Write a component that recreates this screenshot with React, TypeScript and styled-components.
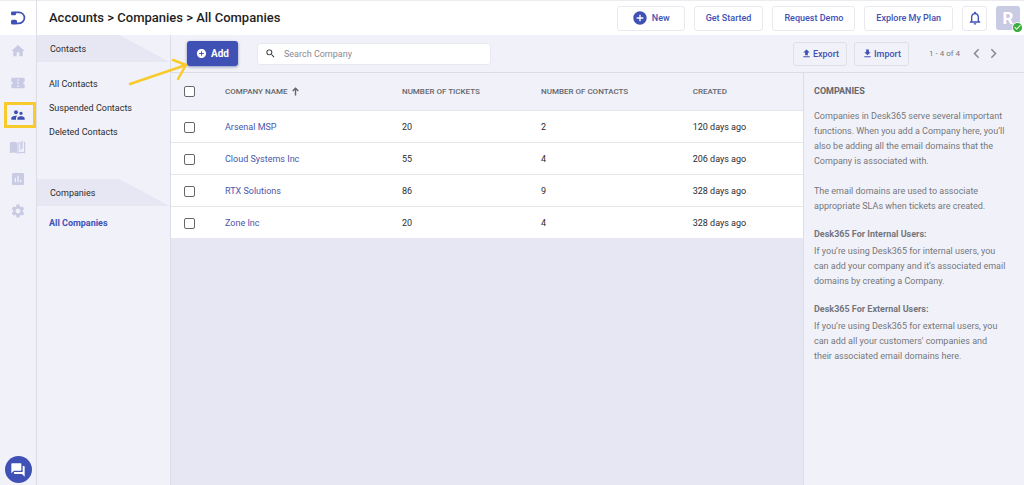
import React from "react";
import styled, { createGlobalStyle } from "styled-components";
import {
  MdHome,
  MdConfirmationNumber,
  MdSupervisorAccount,
  MdAssessment,
  MdSettings,
  MdForum,
  MdSearch,
  MdChevronLeft,
  MdChevronRight,
  MdAddCircle,
  MdNotificationsNone,
  MdUpload,
  MdDownload,
  MdCheckCircle,
} from "react-icons/md";

const color = {
  primary: "#3f51b5",
  ink: "#2b2b2f",
  grey: "#75767c",
  panel: "#f1f2f9",
  shade: "#e7e7f3",
  line: "#dcdde6",
  faded: "#c9cae3",
  highlight: "#f8ca2c",
};

const GlobalStyle = createGlobalStyle`
  *, *::before, *::after { box-sizing: border-box; }
  body {
    margin: 0;
    font-family: Roboto, "Liberation Sans", sans-serif;
    font-size: 9px;
    line-height: 16px;
    color: ${color.ink};
  }
  button, input { font: inherit; }
  a { text-decoration: none; }
  h1, h2, h3, p, ul { margin: 0; padding: 0; }
  svg { flex-shrink: 0; }
`;

const Page = styled.div`
  position: relative;
  display: flex;
  min-height: 100vh;
  background: ${color.panel};
`;

const Rail = styled.nav`
  flex: 0 0 37px;
  display: flex;
  flex-direction: column;
  align-items: center;
  border-right: 1px solid ${color.line};
  padding-bottom: 2px;
`;

const LogoLink = styled.a`
  width: 100%;
  height: 35px;
  display: flex;
  align-items: center;
  justify-content: center;
  background: #fff;
  border-top: 1px solid #ececf0;
`;

const RailLink = styled.a<{ $active?: boolean }>`
  width: 32px;
  height: 26px;
  margin-top: 3px;
  margin-bottom: 3px;
  margin-left: 4px;
  padding-right: 5px;
  display: flex;
  align-items: center;
  justify-content: center;
  font-size: 16px;
  color: ${(p) => (p.$active ? color.primary : color.faded)};
  border: 3px solid ${(p) => (p.$active ? color.highlight : "transparent")};
`;

const ChatButton = styled.button`
  width: 27px;
  height: 27px;
  margin-top: auto;
  padding: 0;
  display: flex;
  align-items: center;
  justify-content: center;
  border: 0;
  border-radius: 50%;
  background: ${color.primary};
  color: #fff;
  font-size: 16px;
`;

const Body = styled.div`
  flex: 1;
  min-width: 0;
  display: flex;
  flex-direction: column;
`;

const Header = styled.header`
  height: 35px;
  display: flex;
  align-items: center;
  justify-content: space-between;
  padding: 0 4px 0 12px;
  background: #fff;
  border-top: 1px solid #ececf0;
`;

const Title = styled.h1`
  font-size: 13px;
  font-weight: 500;
  color: #1f1f23;
`;

const HeaderActions = styled.div`
  display: flex;
  align-items: center;
  gap: 9px;
`;

const OutlineButton = styled.button<{ $compact?: boolean }>`
  height: ${(p) => (p.$compact ? 24 : 25)}px;
  padding: 0 ${(p) => (p.$compact ? 7 : 11)}px;
  display: flex;
  align-items: center;
  gap: ${(p) => (p.$compact ? 1 : 4)}px;
  border: 1px solid ${(p) => (p.$compact ? "#dddfe9" : "#e9e9ee")};
  border-radius: 3px;
  background: ${(p) => (p.$compact ? "transparent" : "#fff")};
  color: ${color.primary};
  font-weight: 500;
  white-space: nowrap;
`;

const NewButton = styled(OutlineButton)`
  padding: 0 14px;
`;

const BellButton = styled(OutlineButton)`
  width: 25px;
  padding: 0;
  justify-content: center;
`;

const Avatar = styled.button`
  position: relative;
  width: 24px;
  height: 24px;
  padding: 0;
  border: 0;
  border-radius: 3px;
  background: ${color.faded};
  color: #fff;
  font-size: 17px;
  font-weight: 700;
`;

const Presence = styled.span`
  position: absolute;
  right: -3px;
  bottom: -3px;
  display: flex;
  border-radius: 50%;
  background: #fff;
  color: #3dae3d;
  font-size: 11px;
`;

const Columns = styled.div`
  flex: 1;
  display: flex;
`;

const Sidebar = styled.aside`
  flex: 0 0 134px;
  border-right: 1px solid ${color.line};
`;

const SideSection = styled.section`
  min-height: 144px;
`;

const SideHeading = styled.h2`
  height: 27px;
  padding-left: 13px;
  font-size: 9px;
  font-weight: 400;
  line-height: 28px;
  background: ${color.shade};
  clip-path: polygon(0 0, 62% 0, 100% 100%, 0 100%);
`;

const SideList = styled.ul<{ $tight?: boolean }>`
  list-style: none;
  padding: ${(p) => (p.$tight ? 5 : 10)}px 0 0 12px;
`;

const SideLink = styled.a<{ $active?: boolean }>`
  display: block;
  line-height: 24px;
  color: ${(p) => (p.$active ? color.primary : color.ink)};
  font-weight: ${(p) => (p.$active ? 700 : 400)};
`;

const Main = styled.main`
  flex: 1;
  min-width: 0;
  display: flex;
  flex-direction: column;
`;

const Toolbar = styled.div`
  height: 38px;
  display: flex;
  align-items: center;
  padding: 0 26px 0 16px;
  border-bottom: 1px solid ${color.line};
`;

const AddButton = styled.button`
  width: 51px;
  height: 25px;
  padding: 0;
  display: flex;
  align-items: center;
  justify-content: center;
  gap: 4px;
  border: 0;
  border-radius: 3px;
  background: ${color.primary};
  box-shadow: 0 1px 3px rgba(40, 50, 120, 0.5);
  color: #fff;
  font-size: 10px;
  font-weight: 700;
`;

const SearchBox = styled.label`
  width: 234px;
  height: 22px;
  margin-left: 19px;
  padding-left: 7px;
  display: flex;
  align-items: center;
  gap: 8px;
  border: 1px solid #e8e8ef;
  border-radius: 3px;
  background: #fff;
`;

const SearchInput = styled.input`
  flex: 1;
  min-width: 0;
  padding: 0;
  border: 0;
  outline: 0;
  background: transparent;
  &::placeholder { color: #8b8b90; opacity: 1; }
`;

const ToolbarEnd = styled.div`
  margin-left: auto;
  display: flex;
  align-items: center;
  gap: 7px;
`;

const PageCount = styled.span`
  margin-left: 13px;
  margin-right: 4px;
  font-size: 8px;
  color: ${color.grey};
`;

const PagerButton = styled.button`
  width: 10px;
  padding: 0;
  display: flex;
  justify-content: center;
  border: 0;
  background: none;
  color: #8d8e94;
  font-size: 19px;
`;

const Content = styled.div`
  flex: 1;
  display: flex;
`;

const TableArea = styled.div`
  flex: 1;
  min-width: 0;
  background: ${color.shade};
`;

const Table = styled.table`
  width: 100%;
  table-layout: fixed;
  border-collapse: collapse;
`;

const HeadCell = styled.th<{ $width?: string }>`
  width: ${(p) => p.$width ?? "auto"};
  height: 37px;
  padding: 1px 0 0;
  background: ${color.panel};
  color: #65666c;
  font-size: 8px;
  font-weight: 500;
  text-align: left;
  text-transform: uppercase;
`;

const CheckHeadCell = styled(HeadCell)`
  padding: 0 0 0 13px;
`;

const SortLabel = styled.span`
  display: flex;
  align-items: center;
  gap: 4px;
`;

const Row = styled.tr`
  background: #fff;
  border-top: 1px solid #e6e6ea;
`;

const Cell = styled.td`
  height: 32px;
  padding: 2px 0 0;
`;

const CheckCell = styled(Cell)`
  padding: 2px 0 0 13px;
`;

const Checkbox = styled.input`
  appearance: none;
  display: block;
  width: 11px;
  height: 11px;
  margin: 1px 0 0;
  border: 1px solid #66676b;
  border-radius: 2px;
  background: #fff;
`;

const CompanyLink = styled.a`
  color: #4757ae;
`;

const Info = styled.aside`
  flex: 0 0 221px;
  padding: 11px 17px 0 10px;
  border-left: 1px solid ${color.line};
  color: ${color.grey};
`;

const InfoTitle = styled.h2`
  margin-bottom: 10px;
  font-size: 9px;
  font-weight: 700;
  line-height: 15px;
  color: #65666c;
`;

const InfoHeading = styled.h3`
  margin-bottom: 2px;
  font-size: 9px;
  font-weight: 700;
  line-height: 15px;
`;

const InfoText = styled.p<{ $gap?: number }>`
  margin-bottom: ${(p) => p.$gap ?? 13}px;
  line-height: 15px;
`;

const Pointer = styled.svg`
  position: absolute;
  left: 126px;
  top: 54px;
  pointer-events: none;
`;

const Logo = () => (
  <svg width="16" height="16" viewBox="0 0 16 16" aria-hidden="true">
    <path d="M5 2.4h4a5.3 5.3 0 0 1 0 10.900H6" fill="none" stroke={color.primary} strokeWidth="1.700" />
    <rect x="1" y="1.500" width="5" height="3.800" rx="1.300" fill={color.primary} />
    <rect x="1" y="9.800" width="6" height="4.600" rx="1.500" fill={color.primary} />
  </svg>
);

const BookIcon = () => (
  <svg width="17" height="17" viewBox="0 0 16 16" aria-hidden="true">
    <path d="M.8 3.400C3 2.300 5.500 2.300 7.600 3.500v10.200c-2.100-1.200-4.600-1.200-6.800-.2z" fill="currentColor" />
    <path d="M8.500 13.400c1.900-1 4-1.100 6.200-.5V3.200h-1M8.500 13.400V4l2-1" fill="none" stroke="currentColor" strokeWidth="1.100" />
    <path d="M10.200 3.600 13 1.200v7.500l-2.800 2.200z" fill="currentColor" opacity=".8" />
  </svg>
);

const SortIcon = () => (
  <svg width="7" height="9" viewBox="0 0 7 9" aria-hidden="true">
    <path d="M3.500 8.500V1.500M.7 4 3.500 1.200 6.300 4" fill="none" stroke="currentColor" strokeWidth="1.400" />
  </svg>
);

const railItems = [
  { name: "Home", icon: <MdHome /> },
  { name: "Tickets", icon: <MdConfirmationNumber /> },
  { name: "Accounts", icon: <MdSupervisorAccount />, active: true },
  { name: "Knowledge base", icon: <BookIcon /> },
  { name: "Reports", icon: <MdAssessment /> },
  { name: "Settings", icon: <MdSettings /> },
];

const companies = [
  { name: "Arsenal MSP", tickets: 20, contacts: 2, created: "120 days ago" },
  { name: "Cloud Systems Inc", tickets: 55, contacts: 4, created: "206 days ago" },
  { name: "RTX Solutions", tickets: 86, contacts: 9, created: "328 days ago" },
  { name: "Zone Inc", tickets: 20, contacts: 4, created: "328 days ago" },
];

export default function App() {
  return (
    <Page>
      <GlobalStyle />
      <Rail aria-label="Primary">
        <LogoLink href="#" aria-label="Desk365">
          <Logo />
        </LogoLink>
        {railItems.map((item) => (
          <RailLink key={item.name} href="#" aria-label={item.name} $active={item.active}>
            {item.icon}
          </RailLink>
        ))}
        <ChatButton aria-label="Chat">
          <MdForum />
        </ChatButton>
      </Rail>

      <Body>
        <Header>
          <Title>Accounts &gt; Companies &gt; All Companies</Title>
          <HeaderActions>
            <NewButton>
              <MdAddCircle size={16} />
              New
            </NewButton>
            <OutlineButton>Get Started</OutlineButton>
            <OutlineButton>Request Demo</OutlineButton>
            <OutlineButton>Explore My Plan</OutlineButton>
            <BellButton aria-label="Notifications">
              <MdNotificationsNone size={16} />
            </BellButton>
            <Avatar aria-label="Account">
              R
              <Presence>
                <MdCheckCircle />
              </Presence>
            </Avatar>
          </HeaderActions>
        </Header>

        <Columns>
          <Sidebar>
            <SideSection>
              <SideHeading>Contacts</SideHeading>
              <SideList>
                {["All Contacts", "Suspended Contacts", "Deleted Contacts"].map((label) => (
                  <li key={label}>
                    <SideLink href="#">{label}</SideLink>
                  </li>
                ))}
              </SideList>
            </SideSection>
            <SideSection>
              <SideHeading>Companies</SideHeading>
              <SideList $tight>
                <li>
                  <SideLink href="#" $active>
                    All Companies
                  </SideLink>
                </li>
              </SideList>
            </SideSection>
          </Sidebar>

          <Main>
            <Toolbar>
              <AddButton>
                <MdAddCircle size={11} />
                Add
              </AddButton>
              <SearchBox>
                <MdSearch size={11} />
                <SearchInput type="text" placeholder="Search Company" aria-label="Search Company" />
              </SearchBox>
              <ToolbarEnd>
                <OutlineButton $compact>
                  <MdUpload size={11} />
                  Export
                </OutlineButton>
                <OutlineButton $compact>
                  <MdDownload size={11} />
                  Import
                </OutlineButton>
                <PageCount>1 - 4 of 4</PageCount>
                <PagerButton aria-label="Previous page">
                  <MdChevronLeft />
                </PagerButton>
                <PagerButton aria-label="Next page">
                  <MdChevronRight />
                </PagerButton>
              </ToolbarEnd>
            </Toolbar>

            <Content>
              <TableArea>
                <Table>
                  <thead>
                    <tr>
                      <CheckHeadCell $width="54px">
                        <Checkbox type="checkbox" aria-label="Select all companies" />
                      </CheckHeadCell>
                      <HeadCell $width="28%">
                        <SortLabel>
                          Company name
                          <SortIcon />
                        </SortLabel>
                      </HeadCell>
                      <HeadCell $width="22%">Number of tickets</HeadCell>
                      <HeadCell $width="24%">Number of contacts</HeadCell>
                      <HeadCell>Created</HeadCell>
                    </tr>
                  </thead>
                  <tbody>
                    {companies.map((company) => (
                      <Row key={company.name}>
                        <CheckCell>
                          <Checkbox type="checkbox" aria-label={`Select ${company.name}`} />
                        </CheckCell>
                        <Cell>
                          <CompanyLink href="#">{company.name}</CompanyLink>
                        </Cell>
                        <Cell>{company.tickets}</Cell>
                        <Cell>{company.contacts}</Cell>
                        <Cell>{company.created}</Cell>
                      </Row>
                    ))}
                  </tbody>
                </Table>
              </TableArea>

              <Info>
                <InfoTitle>COMPANIES</InfoTitle>
                <InfoText $gap={15}>
                  Companies in Desk365 serve several important functions. When you add a Company
                  here, you’ll also be adding all the email domains that the Company is associated
                  with.
                </InfoText>
                <InfoText>
                  The email domains are used to associate appropriate SLAs when tickets are created.
                </InfoText>
                <InfoHeading>Desk365 For Internal Users:</InfoHeading>
                <InfoText>
                  If you’re using Desk365 for internal users, you can add your company and it’s
                  associated email domains by creating a Company.
                </InfoText>
                <InfoHeading>Desk365 For External Users:</InfoHeading>
                <InfoText>
                  If you’re using Desk365 for external users, you can add all your customers'
                  companies and their associated email domains here.
                </InfoText>
              </Info>
            </Content>
          </Main>
        </Columns>
      </Body>

      <Pointer width="64" height="32" viewBox="0 0 64 32" aria-hidden="true">
        <path
          d="M4 30 60 11M47 6l13 5-8 14"
          fill="none"
          stroke={color.highlight}
          strokeWidth="2.500"
          strokeLinecap="round"
          strokeLinejoin="round"
        />
      </Pointer>
    </Page>
  );
}
